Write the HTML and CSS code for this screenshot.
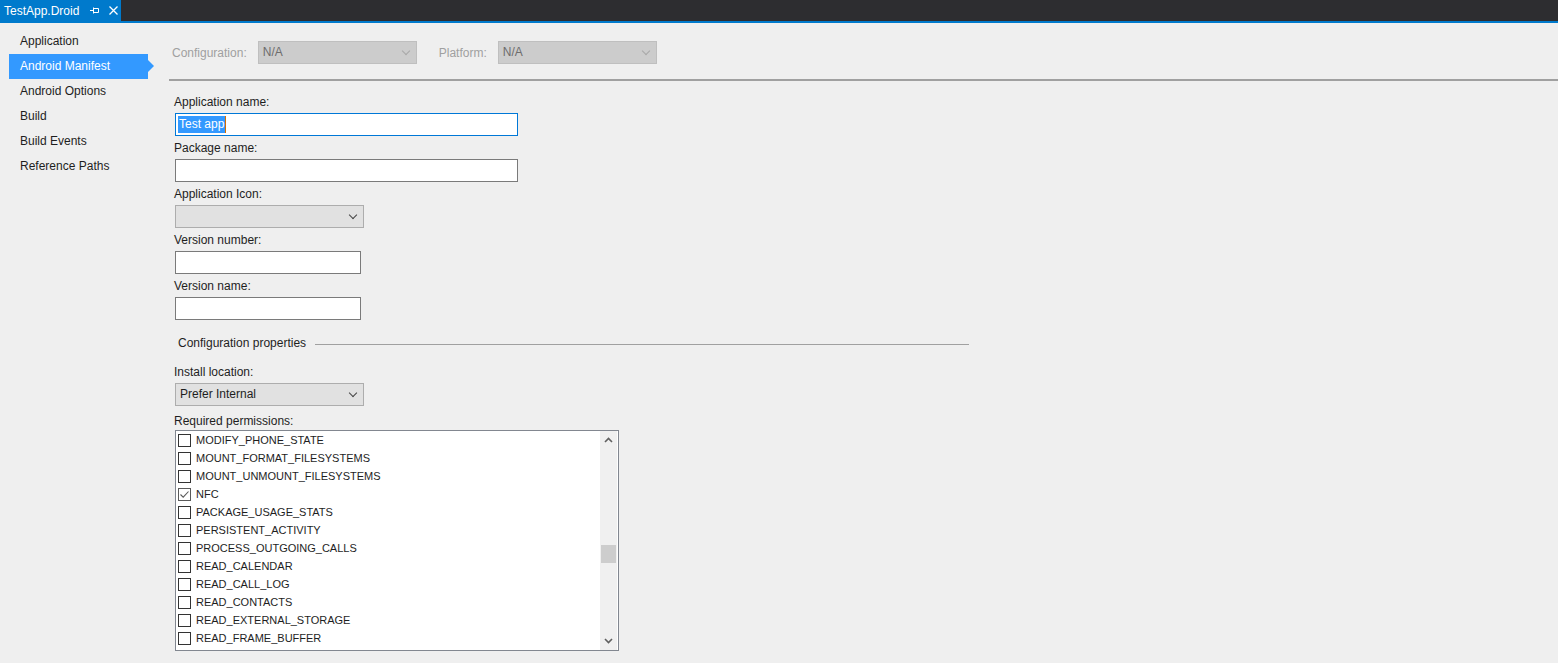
FILE: index.html
```html
<!DOCTYPE html>
<html lang="en">
<head>
    <meta charset="UTF-8">
    <title>TestApp.Droid</title>
    <link rel="stylesheet" href="styles.css">
</head>
<body>
    <!-- Document tab well -->
    <div class="tab-well">
        <div class="doc-tab">
            <span class="doc-title">TestApp.Droid</span>
            <svg class="pin" width="9" height="9" viewBox="0 0 9 9">
                <path d="M0 4.5H3M3.5 1.5V7.5M3.5 2.5H8.5V6.5H3.5" fill="none" stroke="#fff" stroke-width="1"/>
            </svg>
            <svg class="close" width="9" height="9" viewBox="0 0 9 9">
                <path d="M0.5 0.5L8.5 8.5M8.5 0.5L0.5 8.5" stroke="#fff" stroke-width="1.3"/>
            </svg>
        </div>
    </div>

    <div class="main">
        <!-- Page list -->
        <div class="side-nav">
            <div class="nav-item">Application</div>
            <div class="nav-item active">Android Manifest</div>
            <div class="nav-item">Android Options</div>
            <div class="nav-item">Build</div>
            <div class="nav-item">Build Events</div>
            <div class="nav-item">Reference Paths</div>
        </div>

        <div class="content">
            <div class="config-bar">
                <span class="config-label">Configuration:</span>
                <div class="combo disabled wide">N/A<span class="chev"></span></div>
                <span class="config-label platform">Platform:</span>
                <div class="combo disabled wide">N/A<span class="chev"></span></div>
            </div>

            <div class="form">
                <div class="field-label">Application name:</div>
                <div class="textbox long focused"><span class="sel">Test app</span><span class="caret"></span></div>

                <div class="field-label">Package name:</div>
                <div class="textbox long"></div>

                <div class="field-label">Application Icon:</div>
                <div class="combo medium"><span class="chev"></span></div>

                <div class="field-label">Version number:</div>
                <div class="textbox short"></div>

                <div class="field-label">Version name:</div>
                <div class="textbox short"></div>

                <div class="group-title">
                    <span>Configuration properties</span>
                    <div class="group-line"></div>
                </div>

                <div class="field-label">Install location:</div>
                <div class="combo medium install">Prefer Internal<span class="chev"></span></div>

                <div class="field-label tight">Required permissions:</div>
                <div class="listbox">
                    <div class="list-items">
                        <div class="perm"><span class="box"></span>MODIFY_PHONE_STATE</div>
                        <div class="perm"><span class="box"></span>MOUNT_FORMAT_FILESYSTEMS</div>
                        <div class="perm"><span class="box"></span>MOUNT_UNMOUNT_FILESYSTEMS</div>
                        <div class="perm"><span class="box checked"><svg width="11" height="11" viewBox="0 0 11 11"><path d="M1.5 5.5L4.2 8.2L9.5 2.5" fill="none" stroke="#5a5a5a" stroke-width="1.1"/></svg></span>NFC</div>
                        <div class="perm"><span class="box"></span>PACKAGE_USAGE_STATS</div>
                        <div class="perm"><span class="box"></span>PERSISTENT_ACTIVITY</div>
                        <div class="perm"><span class="box"></span>PROCESS_OUTGOING_CALLS</div>
                        <div class="perm"><span class="box"></span>READ_CALENDAR</div>
                        <div class="perm"><span class="box"></span>READ_CALL_LOG</div>
                        <div class="perm"><span class="box"></span>READ_CONTACTS</div>
                        <div class="perm"><span class="box"></span>READ_EXTERNAL_STORAGE</div>
                        <div class="perm"><span class="box"></span>READ_FRAME_BUFFER</div>
                    </div>
                    <div class="scrollbar">
                        <svg class="arrow" width="9" height="6" viewBox="0 0 9 6"><path d="M1 5L4.5 1.5L8 5" fill="none" stroke="#606060" stroke-width="1.6"/></svg>
                        <div class="track"><div class="thumb"></div></div>
                        <svg class="arrow" width="9" height="6" viewBox="0 0 9 6"><path d="M1 1L4.5 4.5L8 1" fill="none" stroke="#606060" stroke-width="1.6"/></svg>
                    </div>
                </div>
            </div>
        </div>
    </div>
</body>
</html>
```

FILE: styles.css
```css
body {
    margin: 0;
    background: #efefef;
    font-family: "Liberation Sans", Arial, sans-serif;
    font-size: 12px;
    color: #1e1e1e;
    height: 663px;
    overflow: hidden;
}
.tab-well {
    height: 21px;
    background: #2d2d30;
    border-bottom: 2px solid #007acc;
    display: flex;
}
.doc-tab {
    width: 121px;
    background: #007acc;
    color: #fff;
    display: flex;
    align-items: center;
    padding-left: 4px;
    box-sizing: border-box;
}
.doc-title {
    font-size: 12px;
}
.doc-tab .pin {
    margin-left: 11px;
}
.doc-tab .close {
    margin-left: 10px;
}

.main {
    display: flex;
}
.side-nav {
    width: 169px;
    padding-top: 6px;
    flex-shrink: 0;
}
.nav-item {
    position: relative;
    margin-left: 9px;
    width: 139px;
    height: 25px;
    line-height: 25px;
    padding-left: 11px;
    box-sizing: border-box;
}
.nav-item.active {
    background: #3399ff;
    color: #fff;
}
.nav-item.active::after {
    content: "";
    position: absolute;
    right: -6px;
    top: 6px;
    border-top: 6px solid transparent;
    border-bottom: 6px solid transparent;
    border-left: 6px solid #3399ff;
}

.content {
    flex: 1;
}
.config-bar {
    display: flex;
    align-items: center;
    margin-top: 18px;
    padding-left: 3px;
    padding-bottom: 15px;
    border-bottom: 2px solid #a0a0a0;
}
.config-label {
    color: #a0a0a0;
    margin-right: 11px;
}
.config-label.platform {
    margin-left: 22px;
}
.combo {
    position: relative;
    height: 23px;
    line-height: 21px;
    box-sizing: border-box;
    border: 1px solid #adadad;
    background: #e1e1e1;
    padding-left: 4px;
}
.combo.disabled {
    background: #cccccc;
    border-color: #bfbfbf;
    color: #6d6d6d;
}
.combo.wide {
    width: 159px;
}
.combo.medium {
    width: 189px;
}
.chev {
    position: absolute;
    right: 7px;
    top: 6px;
    width: 5px;
    height: 5px;
    border-right: 1px solid #444;
    border-bottom: 1px solid #444;
    transform: rotate(45deg);
}
.combo.disabled .chev {
    border-color: #a8a8a8;
}

.form {
    padding-left: 5px;
    padding-top: 13px;
}
.field-label {
    height: 16px;
    line-height: 16px;
    margin-bottom: 3px;
}
.field-label.tight {
    margin-bottom: 1px;
}
.textbox {
    height: 23px;
    box-sizing: border-box;
    border: 1px solid #7a7a7a;
    background: #fff;
    margin-left: 1px;
    margin-bottom: 4px;
    display: flex;
    align-items: center;
    padding-left: 2px;
}
.form .combo {
    margin-left: 1px;
    margin-bottom: 4px;
}
.form .combo.install {
    margin-bottom: 7px;
}
.textbox.long {
    width: 343px;
}
.textbox.short {
    width: 186px;
}
.textbox.focused {
    border-color: #0078d7;
}
.sel {
    background: #3399ff;
    color: #fff;
    line-height: 17px;
    padding: 0 1px;
}
.caret {
    width: 1px;
    height: 17px;
    background: #d36e00;
}

.group-title {
    display: flex;
    align-items: center;
    margin-top: 15px;
    margin-bottom: 13px;
    padding-left: 4px;
    width: 791px;
    line-height: 16px;
}
.group-line {
    flex: 1;
    height: 1px;
    background: #a0a0a0;
    margin-left: 9px;
    margin-top: 2px;
}

.listbox {
    display: flex;
    width: 444px;
    height: 221px;
    box-sizing: border-box;
    border: 1px solid #828790;
    background: #fff;
    margin-left: 1px;
}
.list-items {
    flex: 1;
    font-size: 11px;
}
.perm {
    display: flex;
    align-items: center;
    height: 18px;
    padding-left: 2px;
}
.box {
    width: 13px;
    height: 13px;
    box-sizing: border-box;
    border: 1px solid #333;
    background: #fff;
    margin-right: 5px;
    display: flex;
    align-items: center;
    justify-content: center;
}
.box.checked {
    border-color: #5a5a5a;
}
.scrollbar {
    width: 17px;
    background: #f0f0f0;
    display: flex;
    flex-direction: column;
    align-items: center;
    margin-right: 1px;
}
.arrow {
    margin: 6px 0;
}
.track {
    flex: 1;
    width: 100%;
    padding-top: 96px;
}
.thumb {
    height: 18px;
    background: #cdcdcd;
    margin: 0 1px;
}
```
